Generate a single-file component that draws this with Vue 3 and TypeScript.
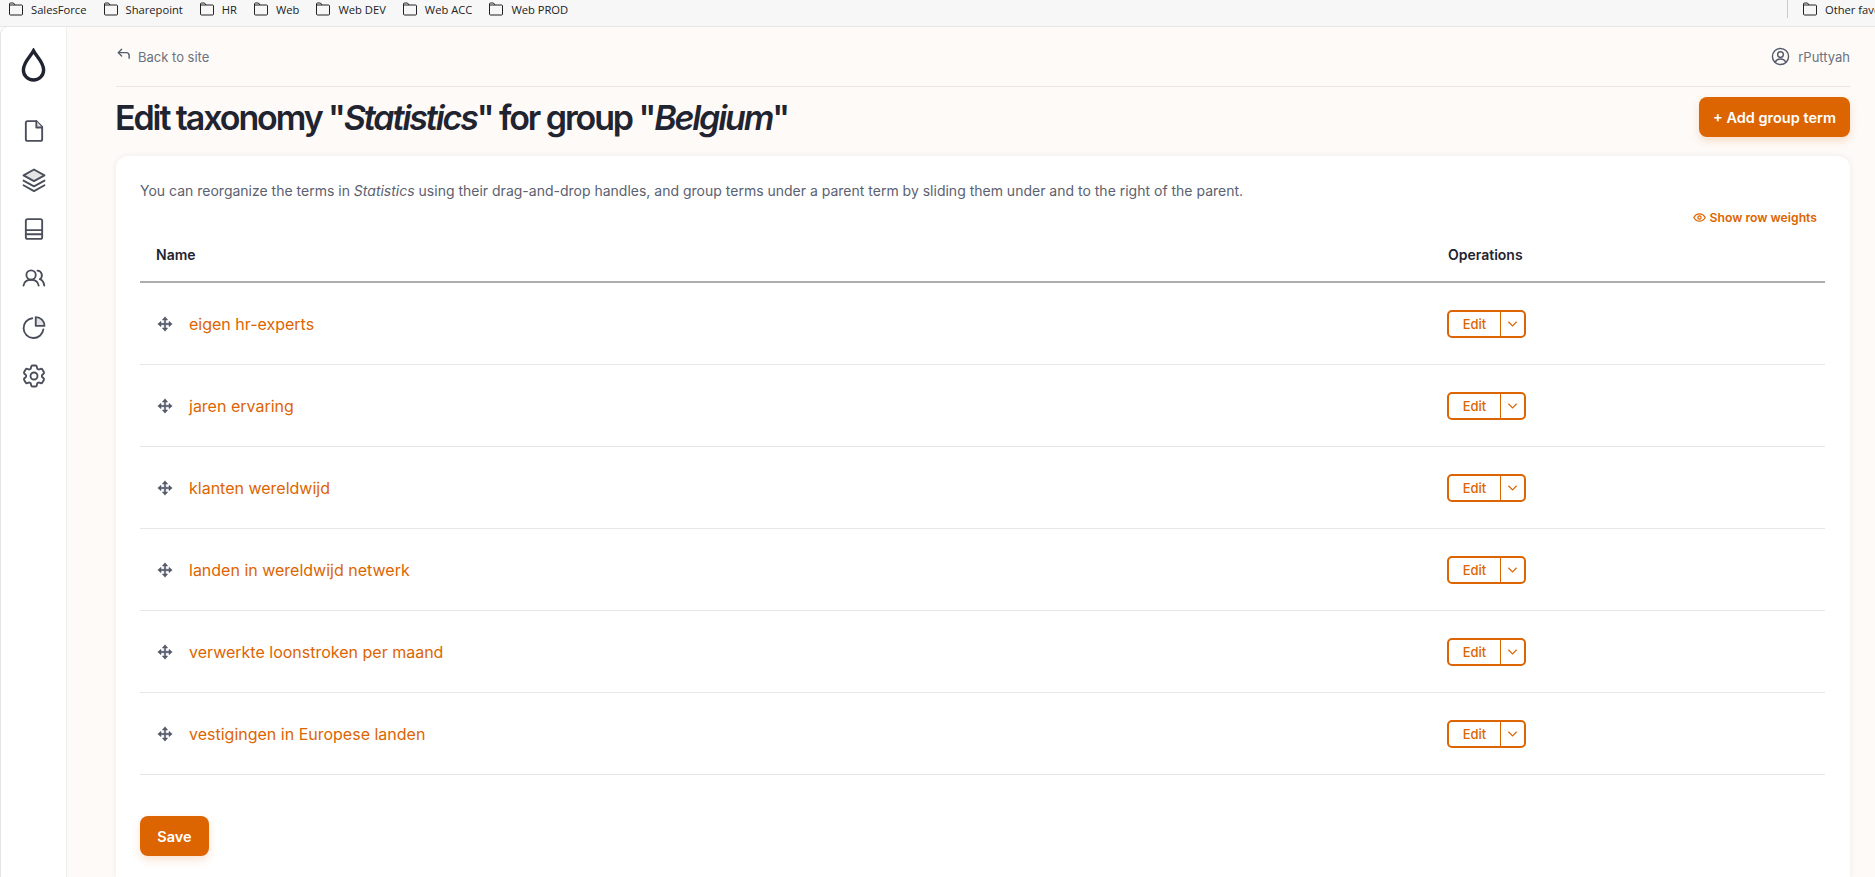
<script setup lang="ts">
const bookmarks: string[] = ['SalesForce', 'Sharepoint', 'HR', 'Web', 'Web DEV', 'Web ACC', 'Web PROD']
const terms: string[] = [
  'eigen hr-experts',
  'jaren ervaring',
  'klanten wereldwijd',
  'landen in wereldwijd netwerk',
  'verwerkte loonstroken per maand',
  'vestigingen in Europese landen',
]
</script>

<template>
  <div class="page">
    <div class="favbar">
      <div class="favs">
        <span v-for="b in bookmarks" :key="b" class="fav">
          <svg class="folder" viewBox="0 0 16 14" width="16" height="14"><path d="M1.500 3V2a1 1 0 0 1 1-1h3l1.500 2h6.500a1 1 0 0 1 1 1v8a1 1 0 0 1-1 1h-11a1 1 0 0 1-1-1z" fill="none" stroke="#222" stroke-width="1"/><path d="M1.500 3H7" stroke="#222" stroke-width="1"/></svg>
          {{ b }}
        </span>
      </div>
      <div class="other">
        <svg class="folder" viewBox="0 0 16 14" width="16" height="14"><path d="M1.500 3V2a1 1 0 0 1 1-1h3l1.500 2h6.500a1 1 0 0 1 1 1v8a1 1 0 0 1-1 1h-11a1 1 0 0 1-1-1z" fill="none" stroke="#222" stroke-width="1"/><path d="M1.500 3H7" stroke="#222" stroke-width="1"/></svg>
        Other favorites
      </div>
    </div>
    <div class="shell">
      <aside class="side">
        <svg class="logo" viewBox="0 0 24 32" width="27" height="36"><path d="M12 2.500C9.500 7.500 3 12.500 3 19.500a9 9 0 0 0 18 0C21 12.500 14.500 7.500 12 2.500z" fill="none" stroke="#1f2430" stroke-width="3"/></svg>
        <nav class="nav">
          <svg viewBox="0 0 24 24" width="28" height="28" class="ico"><path d="M6.500 3.500h7.500l5 5v10.500a1.500 1.500 0 0 1-1.500 1.500h-11a1.500 1.500 0 0 1-1.500-1.500v-14a1.500 1.500 0 0 1 1.500-1.500z"/><path d="M14 3.500V9h5" fill="#e4e4e4"/></svg>
          <svg viewBox="0 0 24 24" width="28" height="28" class="ico"><path d="M12 3l9 5-9 5-9-5z" fill="#e4e4e4"/><path d="M3 12.500l9 5 9-5"/><path d="M3 16.500l9 5 9-5"/></svg>
          <svg viewBox="0 0 24 24" width="28" height="28" class="ico"><rect x="5" y="3.500" width="14" height="17" rx="1.500"/><path d="M5 13h14M5 16.500h14"/></svg>
          <svg viewBox="0 0 24 24" width="28" height="28" class="ico"><circle cx="9.500" cy="9.500" r="4"/><path d="M3 18.500c.5-3 3-5 6.500-5s6 2 6.500 5"/><path d="M15 5.700a4 4 0 0 1 2 7.300c2 .8 3.500 3 3.800 5.500"/></svg>
          <svg viewBox="0 0 24 24" width="28" height="28" class="ico"><path d="M10.500 4.500a8.500 8.500 0 1 0 9.500 9.500"/><path d="M13.500 3.500v7.500h7.500a7.500 7.500 0 0 0-7.500-7.500z" fill="#e4e4e4"/></svg>
          <svg viewBox="0 0 24 24" width="28" height="28" class="ico"><path d="M9.594 3.940c.09-.542.56-.94 1.110-.94h2.593c.55 0 1.020.398 1.110.94l.213 1.281c.063.374.313.686.645.87.074.04.147.083.22.127.325.196.72.257 1.075.124l1.217-.456a1.125 1.125 0 0 1 1.370.49l1.296 2.247a1.125 1.125 0 0 1-.26 1.431l-1.003.827c-.293.241-.438.613-.43.992a7.723 7.723 0 0 1 0 .255c-.008.378.137.75.43.991l1.004.827c.424.35.534.955.26 1.430l-1.298 2.247a1.125 1.125 0 0 1-1.369.491l-1.217-.456c-.355-.133-.75-.072-1.076.124a6.470 6.470 0 0 1-.22.128c-.331.183-.581.495-.644.869l-.213 1.281c-.09.543-.56.94-1.110.94h-2.594c-.55 0-1.019-.398-1.110-.94l-.213-1.281c-.062-.374-.312-.686-.644-.87a6.520 6.520 0 0 1-.22-.127c-.325-.196-.72-.257-1.076-.124l-1.217.456a1.125 1.125 0 0 1-1.369-.49l-1.297-2.247a1.125 1.125 0 0 1 .26-1.431l1.004-.827c.292-.24.437-.613.43-.991a6.932 6.932 0 0 1 0-.255c.007-.38-.138-.751-.43-.992l-1.004-.827a1.125 1.125 0 0 1-.26-1.430l1.297-2.247a1.125 1.125 0 0 1 1.370-.491l1.216.456c.356.133.751.072 1.076-.124.072-.044.146-.086.22-.128.332-.183.582-.495.644-.869l.214-1.280Z"/><circle cx="12" cy="12" r="3"/></svg>
        </nav>
      </aside>
      <main class="main">
        <header class="top">
          <a class="back">
            <svg viewBox="0 0 16 16" width="15" height="15" class="small"><path d="M6 2.500L2.500 6 6 9.500"/><path d="M2.500 6H11a3 3 0 0 1 3 3v3"/></svg>
            Back to site
          </a>
          <span class="user">
            <svg viewBox="0 0 20 20" width="19" height="19" class="small"><circle cx="10" cy="10" r="8.500"/><circle cx="10" cy="8" r="3"/><path d="M4.500 16c1-2.500 3-3.300 5.500-3.300s4.500.8 5.500 3.300"/></svg>
            rPuttyah
          </span>
        </header>
        <div class="heading">
          <h1>Edit taxonomy "<em>Statistics</em>" for group "<em>Belgium</em>"</h1>
          <button class="btn add">+ Add group term</button>
        </div>
        <section class="card">
          <p class="help">You can reorganize the terms in <em>Statistics</em> using their drag-and-drop handles, and group terms under a parent term by sliding them under and to the right of the parent.</p>
          <div class="weights">
            <svg viewBox="0 0 16 16" width="13" height="13"><path d="M1 8s2.500-4.500 7-4.500S15 8 15 8s-2.500 4.500-7 4.500S1 8 1 8z" fill="none" stroke="#dc6502" stroke-width="1.500"/><circle cx="8" cy="8" r="2" fill="none" stroke="#dc6502" stroke-width="1.500"/></svg>
            Show row weights
          </div>
          <div class="thead">
            <span class="c-name">Name</span>
            <span class="c-ops ops-head">Operations</span>
          </div>
          <div v-for="t in terms" :key="t" class="row">
            <div class="c-name term">
              <svg viewBox="0 0 16 16" width="16" height="16" class="move"><path d="M8 .8L5.300 4h2v3.300H4v-2L.8 8 4 10.700v-2h3.300V12h-2L8 15.200 10.700 12h-2V8.700H12v2L15.200 8 12 5.300v2H8.700V4h2z" fill="#555b6b" stroke="#555b6b" stroke-width=".5" stroke-linejoin="round"/></svg>
              <a class="link">{{ t }}</a>
            </div>
            <div class="c-ops">
              <span class="split">
                <span class="edit">Edit</span>
                <span class="caret"><svg viewBox="0 0 12 8" width="11" height="8"><path d="M1.500 1.500L6 6l4.500-4.500" fill="none" stroke="#dc6502" stroke-width="1.300"/></svg></span>
              </span>
            </div>
          </div>
          <button class="btn save">Save</button>
        </section>
      </main>
    </div>
  </div>
</template>

<style>
html, body { margin: 0; height: 100%; overflow: hidden; }
</style>

<style scoped>
.page {
  height: 877px;
  display: flex;
  flex-direction: column;
  overflow: hidden;
  font-family: Inter, "Liberation Sans", sans-serif;
  background: #fefaf7;
}
.favbar {
  height: 27px;
  flex: none;
  box-sizing: border-box;
  background: #f7f7f7;
  border-bottom: 1px solid #e6e6e6;
  display: flex;
  justify-content: space-between;
  font-family: "Open Sans", "Liberation Sans", sans-serif;
  font-size: 11.200px;
  color: #222;
}
.favs { display: flex; padding-left: 8px; }
.fav { display: flex; align-items: center; gap: 7px; margin-right: 16px; height: 18px; white-space: nowrap; }
.folder { flex: none; }
.other {
  width: 73px;
  display: flex;
  align-items: center;
  gap: 7px;
  height: 18px;
  white-space: nowrap;
  overflow: hidden;
  border-left: 1px solid #ccc;
  padding-left: 14px;
}
.shell { flex: 1; display: flex; min-height: 0; }
.side {
  width: 67px;
  flex: none;
  box-sizing: border-box;
  background: #fff;
  border-left: 1px solid #e5e5e5;
  border-right: 1px solid #f0eeeb;
  border-top-left-radius: 8px;
  display: flex;
  flex-direction: column;
  align-items: center;
  padding-top: 21px;
}
.logo { display: block; }
.nav { display: flex; flex-direction: column; align-items: center; gap: 21px; margin-top: 33px; }
.ico { fill: none; stroke: #4b4f5c; stroke-width: 1.600; stroke-linejoin: round; stroke-linecap: round; display: block; }
.small { fill: none; stroke: #555b6b; stroke-width: 1.500; stroke-linecap: round; stroke-linejoin: round; flex: none; }
.main { flex: 1; min-width: 0; padding: 0 25px 0 49px; display: flex; flex-direction: column; }
.top {
  height: 60px;
  box-sizing: border-box;
  border-bottom: 1px solid #e9e7e4;
  display: flex;
  justify-content: space-between;
  align-items: center;
  font-size: 13px;
  color: #6b7280;
}
.back { display: flex; align-items: center; gap: 7px; }
.back svg { margin-top: -4px; }
.user { display: flex; align-items: center; gap: 8px; }
.heading {
  display: flex;
  justify-content: space-between;
  align-items: center;
  height: 40px;
  margin-top: 10px;
}
h1 {
  margin: 1px 0 0 -1px;
  font-size: 34px;
  font-weight: 600;
  letter-spacing: -2.100px;
  color: #1f2430;
}
.btn {
  border: 0;
  background: #dc6502;
  color: #fff;
  font: 600 14.500px Inter, "Liberation Sans", sans-serif;
  border-radius: 8px;
  box-shadow: 0 4px 8px rgba(220, 101, 2, .18);
  height: 40px;
  padding: 0;
}
.add { width: 151px; }
.save { width: 69px; display: block; margin-top: 41px; }
.card {
  margin-top: 19px;
  flex: 1;
  background: #fff;
  border-radius: 12px 12px 0 0;
  box-shadow: 0 0 6px rgba(0, 0, 0, .07);
  padding: 26px 25px 0 24px;
}
.help { margin: 0; font-size: 14px; line-height: 18px; color: #5b6170; }
.weights {
  display: flex;
  justify-content: flex-end;
  align-items: center;
  gap: 4px;
  margin-top: 8px;
  padding-right: 8px;
  height: 18px;
  font-size: 12.200px;
  font-weight: 600;
  color: #dc6502;
}
.thead {
  display: flex;
  align-items: center;
  height: 55px;
  box-sizing: border-box;
  border-bottom: 2px solid #adadad;
  font-size: 14px;
  font-weight: 600;
  color: #1f2430;
  margin-top: 2px;
}
.row {
  display: flex;
  align-items: center;
  height: 82px;
  box-sizing: border-box;
  border-bottom: 1px solid #e7e7e7;
}
.c-name { width: 1307px; padding-left: 16px; box-sizing: border-box; flex: none; }
.c-ops { flex: 1; }
.ops-head { padding-left: 1px; }
.term { display: flex; align-items: center; gap: 16px; padding-left: 17px; }
.move { flex: none; }
.link { font-size: 16px; color: #dc6502; }
.split {
  display: inline-flex;
  height: 28px;
  width: 79px;
  box-sizing: border-box;
  border: 2px solid #dc6502;
  border-radius: 5px;
  font-size: 13px;
  font-weight: 500;
  color: #dc6502;
  align-items: stretch;
}
.edit { width: 51px; display: flex; align-items: center; justify-content: center; border-right: 1px solid #dc6502; }
.caret { flex: 1; display: flex; align-items: center; justify-content: center; }
</style>
